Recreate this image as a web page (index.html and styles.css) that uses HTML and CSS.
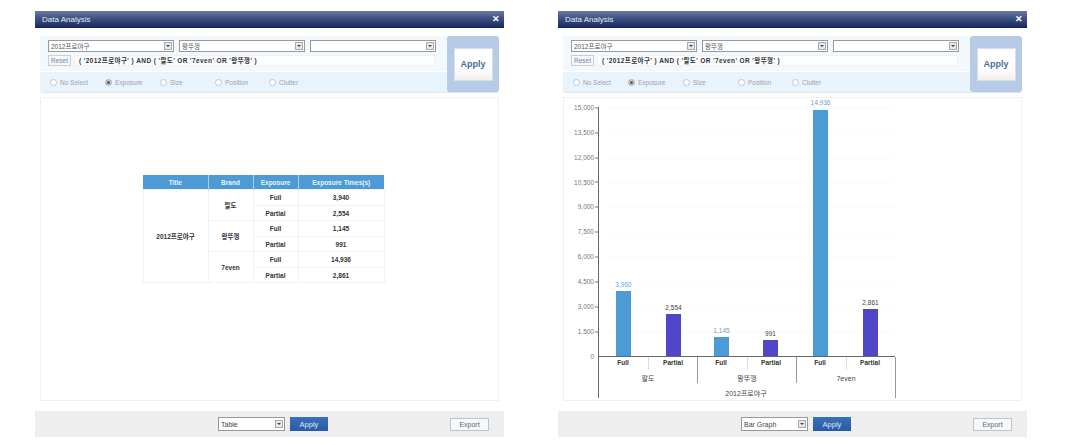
FILE: index.html
```html
<!DOCTYPE html>
<html lang="ko">
<head>
<meta charset="utf-8">
<title>Data Analysis</title>
<link rel="stylesheet" href="styles.css">
</head>
<body>
<section class="window">
  <header class="titlebar"><span>Data Analysis</span><span class="close">✕</span></header>
  <div class="filter">
    <div class="filter-main">
      <div class="filter-top">
        <div class="selects">
          <div class="select wide"><span>2012프로야구</span><i class="arrow"></i></div>
          <div class="select wide"><span>왕뚜껑</span><i class="arrow"></i></div>
          <div class="select wide"><span></span><i class="arrow"></i></div>
        </div>
        <div class="query-row">
          <button class="reset">Reset</button>
          <div class="query">( '2012프로야구' ) AND ( '팔도' OR '7even' OR '왕뚜껑' )</div>
        </div>
      </div>
      <div class="radios">
        <label class="radio r1"><i></i>No Select</label>
        <label class="radio r2 on"><i></i>Exposure</label>
        <label class="radio r3"><i></i>Size</label>
        <label class="radio r4"><i></i>Position</label>
        <label class="radio"><i></i>Clutter</label>
      </div>
    </div>
    <div class="apply-zone"><button class="apply-big">Apply</button></div>
  </div>
  <div class="content center">
    <table class="data">
      <thead><tr><th class="c1">Title</th><th class="c2">Brand</th><th class="c3">Exposure</th><th class="c4">Exposure Times(s)</th></tr></thead>
      <tbody>
        <tr><td rowspan="6">2012프로야구</td><td rowspan="2">팔도</td><td>Full</td><td>3,940</td></tr>
        <tr><td>Partial</td><td>2,554</td></tr>
        <tr><td rowspan="2">왕뚜껑</td><td>Full</td><td>1,145</td></tr>
        <tr><td>Partial</td><td>991</td></tr>
        <tr><td rowspan="2">7even</td><td>Full</td><td>14,936</td></tr>
        <tr><td>Partial</td><td>2,861</td></tr>
      </tbody>
    </table>
  </div>
  <footer class="footer">
    <span></span>
    <div class="footer-mid">
      <div class="select small"><span>Table</span><i class="arrow"></i></div>
      <button class="apply-small">Apply</button>
    </div>
    <button class="export">Export</button>
  </footer>
</section>

<section class="window">
  <header class="titlebar"><span>Data Analysis</span><span class="close">✕</span></header>
  <div class="filter">
    <div class="filter-main">
      <div class="filter-top">
        <div class="selects">
          <div class="select wide"><span>2012프로야구</span><i class="arrow"></i></div>
          <div class="select wide"><span>왕뚜껑</span><i class="arrow"></i></div>
          <div class="select wide"><span></span><i class="arrow"></i></div>
        </div>
        <div class="query-row">
          <button class="reset">Reset</button>
          <div class="query">( '2012프로야구' ) AND ( '팔도' OR '7even' OR '왕뚜껑' )</div>
        </div>
      </div>
      <div class="radios">
        <label class="radio r1"><i></i>No Select</label>
        <label class="radio r2 on"><i></i>Exposure</label>
        <label class="radio r3"><i></i>Size</label>
        <label class="radio r4"><i></i>Position</label>
        <label class="radio"><i></i>Clutter</label>
      </div>
    </div>
    <div class="apply-zone"><button class="apply-big">Apply</button></div>
  </div>
  <div class="content">
    <svg class="chart" width="459" height="304" viewBox="563 97 459 304">
      <g class="grid">
        <path d="M605 108H895M605 133H895M605 158H895M605 182H895M605 207H895M605 232H895M605 257H895M605 282H895M605 307H895M605 332H895"/>
      </g>
      <g class="ylabels">
        <text x="594" y="110">15,000</text><text x="594" y="135">13,500</text><text x="594" y="160">12,000</text>
        <text x="594" y="185">10,500</text><text x="594" y="209">9,000</text><text x="594" y="234">7,500</text>
        <text x="594" y="259">6,000</text><text x="594" y="284">4,500</text><text x="594" y="309">3,000</text>
        <text x="594" y="334">1,500</text><text x="594" y="359">0</text>
      </g>
      <path class="ticks" d="M595 108H598M595 133H598M595 158H598M595 182H598M595 207H598M595 232H598M595 257H598M595 282H598M595 307H598M595 332H598"/>
      <rect class="bar-a" x="616" y="291" width="15" height="65"/>
      <rect class="bar-b" x="666" y="314" width="15" height="42"/>
      <rect class="bar-a" x="714" y="337" width="15" height="19"/>
      <rect class="bar-b" x="763" y="340" width="15" height="16"/>
      <rect class="bar-a" x="813" y="110" width="15" height="246"/>
      <rect class="bar-b" x="863" y="309" width="15" height="47"/>
      <g class="vals">
        <text class="va" x="623.5" y="287">3,960</text><text x="673.5" y="310">2,554</text>
        <text class="va" x="721.5" y="333">1,145</text><text x="770.5" y="336">991</text>
        <text class="va" x="820.5" y="105">14,936</text><text x="870.5" y="305">2,861</text>
      </g>
      <path class="axis" d="M598.500 107V398M598 356.500H895"/>
      <path class="sep-l" d="M648.500 357V370M747.500 357V370M846.500 357V370"/>
      <path class="sep" d="M697.500 357V383M796.500 357V383M895.500 357V398"/>
      <g class="xlabels">
        <text class="b" x="623" y="365">Full</text><text class="b" x="673" y="365">Partial</text>
        <text class="b" x="721" y="365">Full</text><text class="b" x="771" y="365">Partial</text>
        <text class="b" x="820" y="365">Full</text><text class="b" x="870" y="365">Partial</text>
        <text x="648" y="381">팔도</text><text x="747" y="381">왕뚜껑</text><text x="846" y="381">7even</text>
        <text x="746" y="396">2012프로야구</text>
      </g>
    </svg>
  </div>
  <footer class="footer">
    <span></span>
    <div class="footer-mid">
      <div class="select small"><span>Bar Graph</span><i class="arrow"></i></div>
      <button class="apply-small">Apply</button>
    </div>
    <button class="export">Export</button>
  </footer>
</section>
</body>
</html>
```
FILE: styles.css
```css
* { box-sizing: border-box; }
html, body { margin: 0; height: 100%; background: #fff; overflow: hidden; }
body {
  display: flex;
  gap: 54px;
  padding: 11px 0 0 35px;
  font-family: "Liberation Sans", "Noto Sans CJK KR", sans-serif;
  font-size: 7px;
  color: #333;
}
.window { width: 469px; height: 426px; display: flex; flex-direction: column; }
.titlebar {
  height: 17px;
  flex: none;
  display: flex;
  justify-content: space-between;
  align-items: center;
  padding: 0 4px 1px 7px;
  background: linear-gradient(#6a7aa4, #3d4f82 45%, #16265a);
  color: #e6ebf5;
  font-size: 8px;
}
.close { color: #fff; font-size: 9px; font-weight: 700; }

.filter {
  margin: 8px 5px 0;
  height: 57px;
  flex: none;
  display: flex;
  border-radius: 3px;
  background: #e9f3fb;
  border-bottom: 1px solid #dfe6ee;
}
.filter-main { flex: 1; display: flex; flex-direction: column; min-width: 0; }
.filter-top { height: 36px; flex: none; padding: 4px 0 0 8px; background: #f3f8fd; border-bottom: 1px solid #fff; }
.selects { display: flex; gap: 5px; }
.select {
  height: 12px;
  display: flex;
  align-items: center;
  justify-content: space-between;
  padding: 0 1px 0 2px;
  background: #fff;
  border: 1px solid #999;
  color: #555;
  font-size: 6.5px;
}
.select.wide { width: 126px; }
.select.small { width: 67px; height: 14px; color: #444; font-size: 7px; }
.arrow {
  width: 8px;
  height: 8px;
  flex: none;
  position: relative;
  background: #e8e8e8;
  border: 1px solid #aaa;
}
.arrow::after {
  content: "";
  position: absolute;
  left: 1px;
  top: 2px;
  border: 2px solid transparent;
  border-top: 2px solid #444;
  border-bottom: 0;
}
.query-row { display: flex; gap: 3px; margin-top: 3px; }
.reset {
  width: 23px;
  height: 11px;
  padding: 0;
  background: #f6f8fb;
  border: 1px solid #c6ced8;
  color: #7a8698;
  font: 6.5px "Liberation Sans", sans-serif;
}
.query {
  width: 361px;
  height: 11px;
  line-height: 10px;
  padding-left: 4px;
  background: #fbfdff;
  border: 1px solid #eef2f6;
  color: #333;
  font-size: 6.5px;
  font-weight: 700;
  letter-spacing: 0.4px;
  white-space: nowrap;
}
.radios { flex: 1; display: flex; align-items: center; padding-left: 10px; color: #9aa3ad; font-size: 6.5px; }
.radio { display: flex; align-items: center; gap: 3px; }
.radio i {
  width: 7px;
  height: 7px;
  border-radius: 50%;
  border: 1px solid #bcc5cf;
  background: #fff;
}
.radio.on i { background: #555; box-shadow: inset 0 0 0 1px #ddd; }
.r1 { width: 55px; }
.r2 { width: 55px; }
.r3 { width: 55px; }
.r4 { width: 54px; }
.apply-zone {
  width: 52px;
  flex: none;
  display: flex;
  align-items: center;
  justify-content: center;
  background: #b7cbe6;
  border-radius: 3px;
}
.apply-big {
  width: 39px;
  height: 33px;
  padding: 0;
  background: linear-gradient(#fff 60%, #f3eeee);
  border: 1px solid #d8dfe9;
  color: #4a6c9a;
  font: 700 9px "Liberation Sans", sans-serif;
}

.content {
  margin: 4px 5px 0;
  height: 304px;
  flex: none;
  background: #fff;
  border: 1px solid #f0f0f0;
}
.content.center { display: flex; align-items: center; justify-content: center; padding: 0 12px 40px 0; }
.data { width: 241px; border-collapse: collapse; table-layout: fixed; text-align: center; font-size: 6.5px; }
.data th {
  height: 15px;
  padding: 0;
  background: #4d9bd6;
  color: #e8f2fb;
  border-left: 1px solid #a9cfeb;
  font-weight: 700;
}
.data th:first-child { border-left: 0; }
.data td { height: 15.5px; padding: 0; border: 1px solid #f0f2f4; font-weight: 700; color: #333; }
.c1 { width: 65px; }
.c2 { width: 45px; }
.c3 { width: 45px; }
.c4 { width: 86px; }

.chart { display: block; margin: -1px; font-family: "Liberation Sans", "Noto Sans CJK KR", sans-serif; font-size: 6.5px; }
.grid path { stroke: #fafafa; fill: none; }
.ylabels text { text-anchor: end; fill: #777; }
.ticks { stroke: #777; fill: none; }
.axis { stroke: #666; fill: none; }
.sep { stroke: #999; fill: none; }
.sep-l { stroke: #ddd; fill: none; }
.bar-a { fill: #4d9bd6; }
.bar-b { fill: #5046c8; }
.vals text { text-anchor: middle; fill: #444; }
.vals .va { fill: #6f9fc6; }
.xlabels text { text-anchor: middle; fill: #444; font-size: 7px; }
.xlabels .b { font-weight: 700; fill: #333; font-size: 6.5px; }

.footer {
  margin-top: 10px;
  height: 26px;
  flex: none;
  display: grid;
  grid-template-columns: 1fr auto 1fr;
  align-items: center;
  padding: 0 15px 0 22px;
  background: #eee;
}
.footer-mid { display: flex; gap: 5px; }
.apply-small {
  width: 38px;
  height: 14px;
  padding: 0;
  background: linear-gradient(#3a70b8, #2a5aa4);
  border: 0;
  color: #dfe9f6;
  font: 7.5px "Liberation Sans", sans-serif;
}
.export {
  justify-self: end;
  width: 39px;
  height: 13px;
  padding: 0;
  background: #f6f8fb;
  border: 1px solid #bcc4cc;
  color: #666;
  font: 7px "Liberation Sans", sans-serif;
}
```
